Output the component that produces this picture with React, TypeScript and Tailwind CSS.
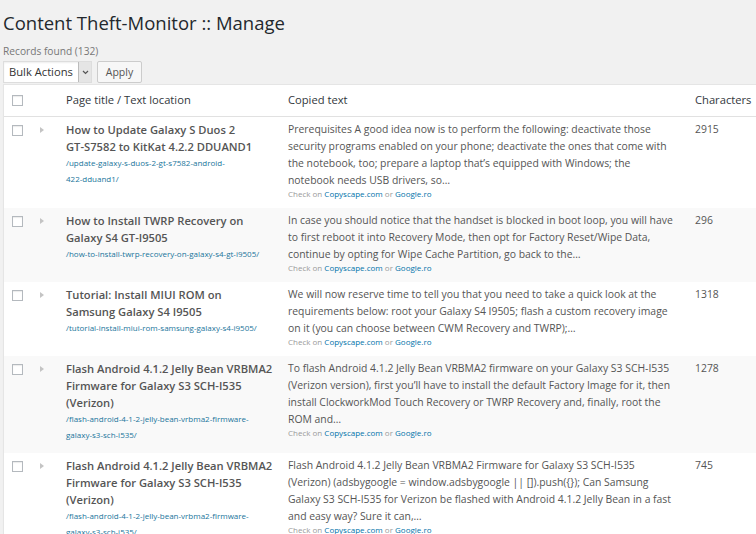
import { Fragment } from 'react';

interface Record {
  title: string[];
  url: string[];
  text: string[];
  chars: number;
}

const records: Record[] = [
  {
    title: ['How to Update Galaxy S Duos 2', 'GT-S7582 to KitKat 4.2.2 DDUAND1'],
    url: ['/update-galaxy-s-duos-2-gt-s7582-android-', '422-dduand1/'],
    text: [
      'Prerequisites A good idea now is to perform the following: deactivate those',
      'security programs enabled on your phone; deactivate the ones that come with',
      'the notebook, too; prepare a laptop that’s equipped with Windows; the',
      'notebook needs USB drivers, so…',
    ],
    chars: 2915,
  },
  {
    title: ['How to Install TWRP Recovery on', 'Galaxy S4 GT-I9505'],
    url: ['/how-to-install-twrp-recovery-on-galaxy-s4-gt-i9505/'],
    text: [
      'In case you should notice that the handset is blocked in boot loop, you will have',
      'to first reboot it into Recovery Mode, then opt for Factory Reset/Wipe Data,',
      'continue by opting for Wipe Cache Partition, go back to the…',
    ],
    chars: 296,
  },
  {
    title: ['Tutorial: Install MIUI ROM on', 'Samsung Galaxy S4 I9505'],
    url: ['/tutorial-install-miui-rom-samsung-galaxy-s4-i9505/'],
    text: [
      'We will now reserve time to tell you that you need to take a quick look at the',
      'requirements below: root your Galaxy S4 I9505; flash a custom recovery image',
      'on it (you can choose between CWM Recovery and TWRP);…',
    ],
    chars: 1318,
  },
  {
    title: ['Flash Android 4.1.2 Jelly Bean VRBMA2', 'Firmware for Galaxy S3 SCH-I535', '(Verizon)'],
    url: ['/flash-android-4-1-2-jelly-bean-vrbma2-firmware-', 'galaxy-s3-sch-i535/'],
    text: [
      'To flash Android 4.1.2 Jelly Bean VRBMA2 firmware on your Galaxy S3 SCH-I535',
      '(Verizon version), first you’ll have to install the default Factory Image for it, then',
      'install ClockworkMod Touch Recovery or TWRP Recovery and, finally, root the',
      'ROM and…',
    ],
    chars: 1278,
  },
  {
    title: ['Flash Android 4.1.2 Jelly Bean VRBMA2', 'Firmware for Galaxy S3 SCH-I535', '(Verizon)'],
    url: ['/flash-android-4-1-2-jelly-bean-vrbma2-firmware-', 'galaxy-s3-sch-i535/'],
    text: [
      'Flash Android 4.1.2 Jelly Bean VRBMA2 Firmware for Galaxy S3 SCH-I535',
      '(Verizon) (adsbygoogle = window.adsbygoogle || []).push({}); Can Samsung',
      'Galaxy S3 SCH-I535 for Verizon be flashed with Android 4.1.2 Jelly Bean in a fast',
      'and easy way? Sure it can,…',
    ],
    chars: 745,
  },
];

function Lines({ lines }: { lines: string[] }) {
  return (
    <>
      {lines.map((l, i) => (
        <Fragment key={i}>
          {i > 0 && <br />}
          {l}
        </Fragment>
      ))}
    </>
  );
}

function Checkbox() {
  return <span className="block w-[11px] h-[11px] bg-white border border-[#b4b9be] shadow-[inset_0_1px_1px_rgba(0,0,0,0.08)]" />;
}

export default function App() {
  return (
    <div className="w-[756px] h-[534px] overflow-hidden bg-[#f1f1f1] font-['Open_Sans',sans-serif] text-[#444]">
      {/* Header */}
      <h2 className="pl-[3px] pt-[9px] text-[18.5px] leading-[28px] text-[#23282d] whitespace-nowrap">
        Content Theft-Monitor :: Manage
      </h2>
      <p className="pl-[3px] mt-[7px] text-[10.2px] leading-[14px] text-[#777]">Records found (132)</p>

      {/* Bulk actions */}
      <div className="flex items-center gap-[5px] pl-[3px] mt-[3px]">
        <div className="flex items-center w-[89px] h-[22px] bg-white border border-[#ddd] shadow-[inset_0_1px_2px_rgba(0,0,0,0.07)]">
          <span className="flex-1 pl-[5px] text-[11.2px] leading-[20px] text-[#333]">Bulk Actions</span>
          <span className="flex items-center justify-center w-[13px] h-[20px] bg-[#e5e5e5] border-l border-[#bbb] text-[#555]">
            <svg width="7" height="5" viewBox="0 0 7 5">
              <path d="M1 1 L3.5 3.5 L6 1" fill="none" stroke="#555" strokeWidth="1.2" />
            </svg>
          </span>
        </div>
        <button className="h-[22px] w-[45px] bg-[#f7f7f7] border border-[#ccc] rounded-[2px] text-[10.5px] leading-[20px] text-[#555]">
          Apply
        </button>
      </div>

      {/* Table */}
      <div className="ml-[3px] mt-[1px] w-[790px] bg-white border border-[#e5e5e5] shadow-[0_1px_1px_rgba(0,0,0,0.04)]">
        <div className="grid grid-cols-[62px_222px_407px_1fr] h-[32px] items-center border-b border-[#e1e1e1] text-[11.2px] text-[#32373c]">
          <div className="pl-[8px]">
            <Checkbox />
          </div>
          <div>Page title / Text location</div>
          <div>Copied text</div>
          <div>Characters</div>
        </div>

        {records.map((r, i) => (
          <div
            key={i}
            className={`grid grid-cols-[62px_222px_407px_1fr] ${i % 2 === 1 ? 'bg-[#f9f9f9]' : 'bg-white'}`}
          >
            <div className="flex items-start pl-[8px] pt-[8px]">
              <Checkbox />
              <span className="ml-[17px] mt-[2px] w-0 h-0 border-y-[3.5px] border-y-transparent border-l-[4px] border-l-[#c4c4c4]" />
            </div>
            <div className="pt-[4px] pb-[10px] whitespace-nowrap">
              <div className="text-[11.2px] leading-[17px] font-semibold text-[#555]">
                <Lines lines={r.title} />
              </div>
              <div className="text-[8px] leading-[16px] text-[#21759b]">
                <Lines lines={r.url} />
              </div>
            </div>
            <div className="pt-[4px] pb-[10px] whitespace-nowrap">
              <div className="text-[10.4px] leading-[17px] text-[#555]">
                <Lines lines={r.text} />
              </div>
              <div className="text-[8px] leading-[9px] text-[#999]">
                Check on <span className="text-[#0073aa]">Copyscape.com</span> or{' '}
                <span className="text-[#0073aa]">Google.ro</span>
              </div>
            </div>
            <div className="pt-[4px] text-[10.4px] leading-[17px] text-[#555]">{r.chars}</div>
          </div>
        ))}
      </div>
    </div>
  );
}
